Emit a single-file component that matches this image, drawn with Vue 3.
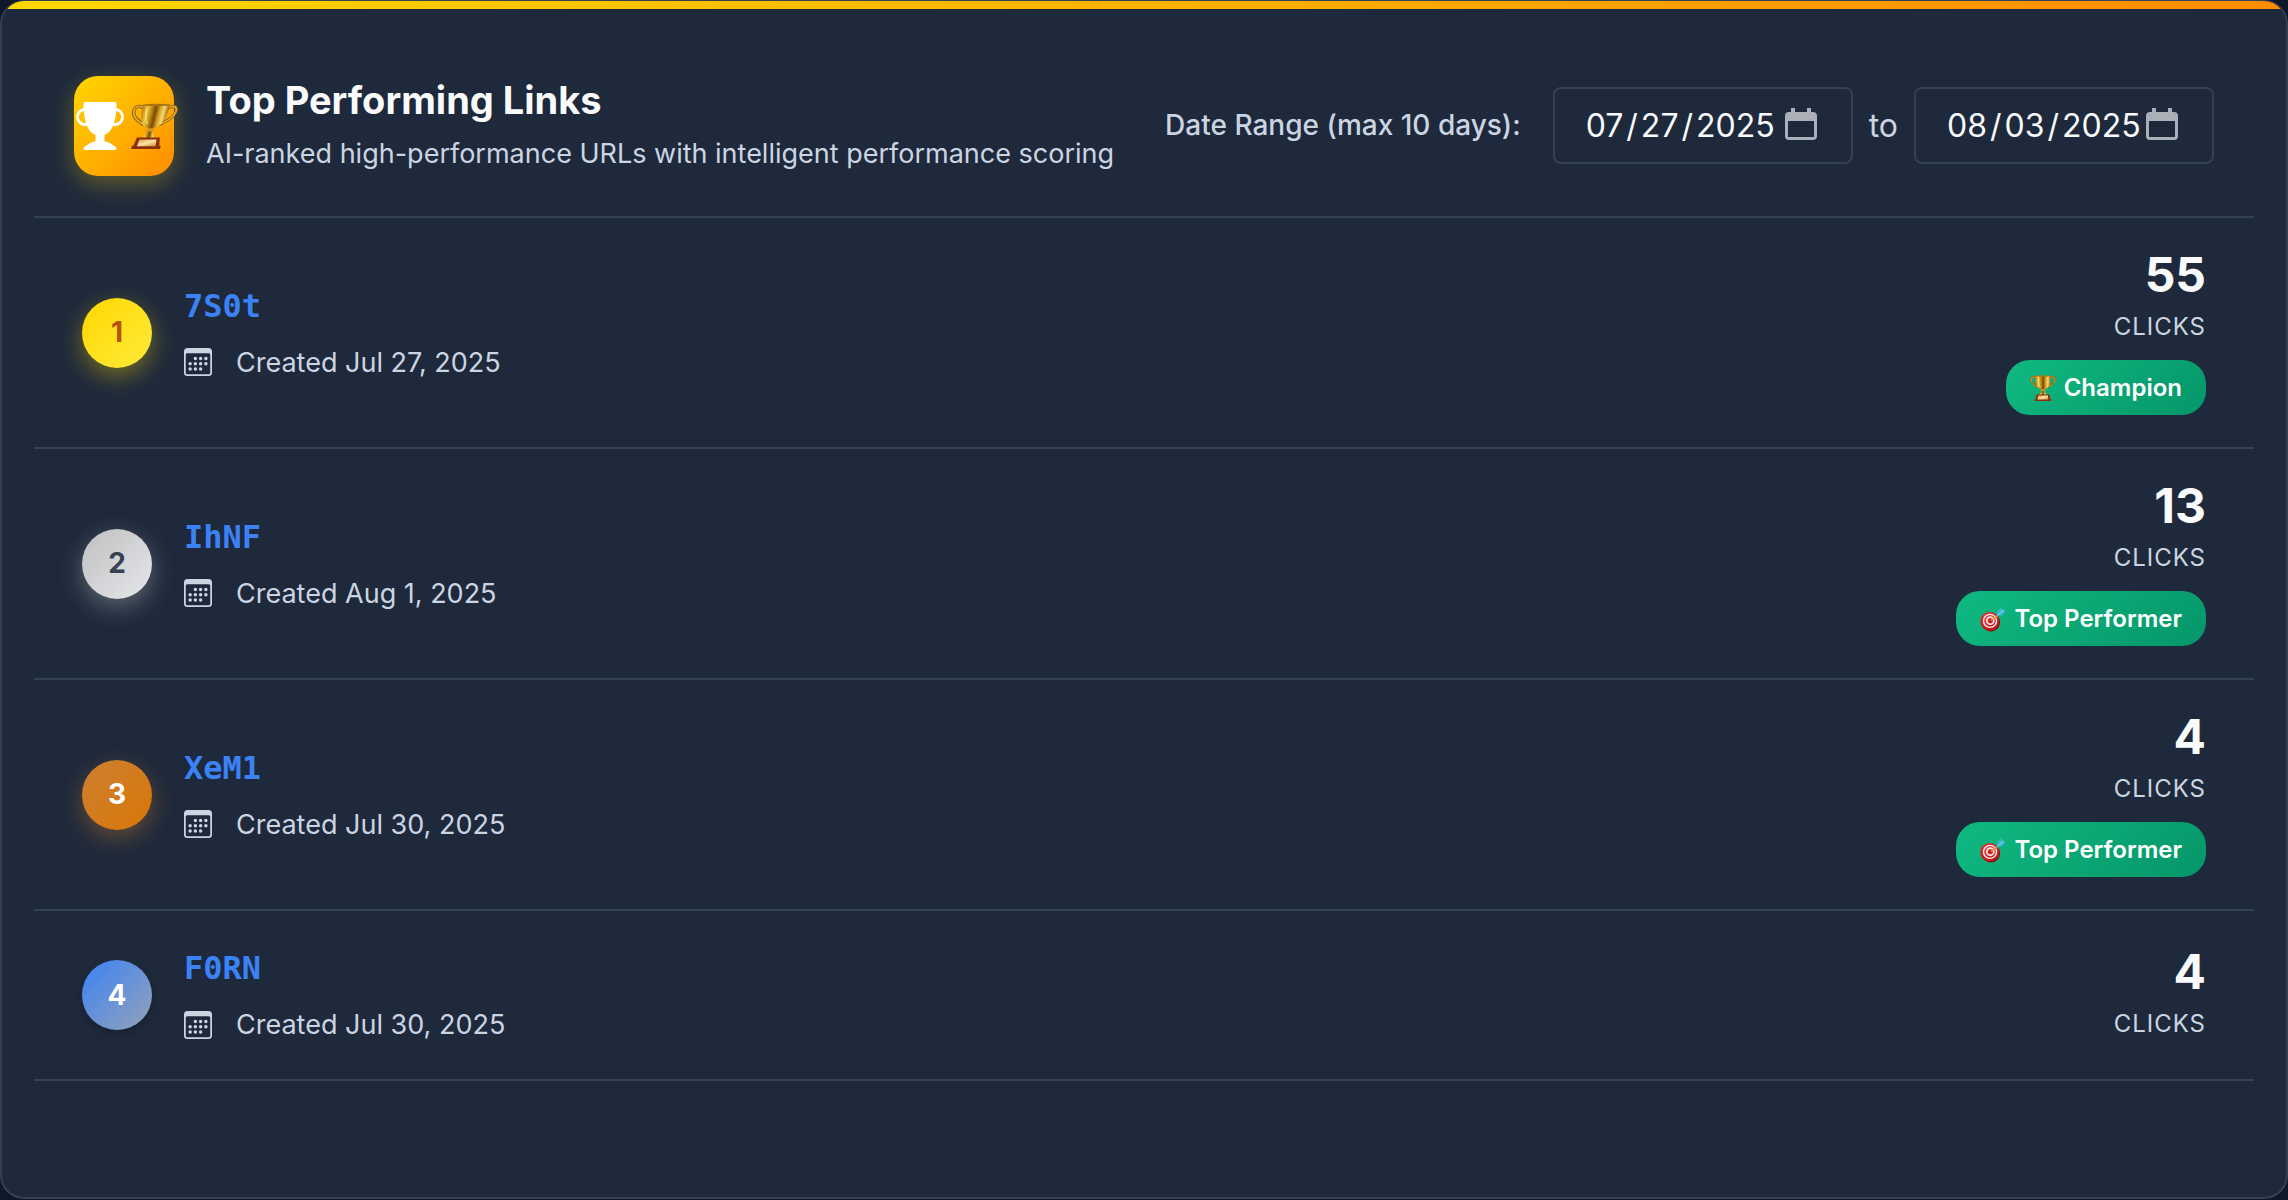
<script setup>
import { ref } from 'vue'

const startDate = ref('2025-07-27')
const endDate = ref('2025-08-03')

const links = ref([
  { code: '7S0t', created: 'Jul 27, 2025', clicks: 55, badge: 'Champion', icon: 'trophy' },
  { code: 'IhNF', created: 'Aug 1, 2025', clicks: 13, badge: 'Top Performer', icon: 'target' },
  { code: 'XeM1', created: 'Jul 30, 2025', clicks: 4, badge: 'Top Performer', icon: 'target' },
  { code: 'F0RN', created: 'Jul 30, 2025', clicks: 4 },
])
</script>

<template>
  <!-- Shared symbols -->
  <svg class="sprite" aria-hidden="true">
    <defs>
      <linearGradient id="gold" x1="0" x2="1" y1="0" y2="0">
        <stop offset="0" stop-color="#b87a12" />
        <stop offset="0.2" stop-color="#f0c945" />
        <stop offset="0.38" stop-color="#b98412" />
        <stop offset="0.52" stop-color="#7a4a06" />
        <stop offset="0.68" stop-color="#d9a526" />
        <stop offset="0.82" stop-color="#f5da6c" />
        <stop offset="1" stop-color="#a66a0c" />
      </linearGradient>
      <linearGradient id="plate" x1="0" x2="1" y1="0" y2="1">
        <stop offset="0" stop-color="#d99a4a" />
        <stop offset="0.5" stop-color="#fbe3a6" />
        <stop offset="1" stop-color="#cf8f3c" />
      </linearGradient>
      <radialGradient id="board" cx="0.4" cy="0.3" r="0.8">
        <stop offset="0" stop-color="#f03a3a" />
        <stop offset="1" stop-color="#b80f16" />
      </radialGradient>
      <symbol id="trophy" viewBox="0 0 48 48" overflow="visible">
        <g fill="none" stroke-linecap="round">
          <path d="M11 5C6 2 1.500 4 2 9c.7 6 6 9 13 13M37 5c5-3 9.500-1 9 4-.7 6-6 9-13 13" stroke="#8a5409" stroke-width="3.400" />
          <path d="M11 5C6 2 1.500 4 2 9c.7 6 6 9 13 13M37 5c5-3 9.500-1 9 4-.7 6-6 9-13 13" stroke="#dfae35" stroke-width="1.800" />
        </g>
        <path d="M19.500 24h9l-1.500 5c0 3 2 5 4.500 7.500h-15C19 34 21 32 21 29z" fill="url(#gold)" />
        <path d="M10 1.500h28c0 11-1 18-7 23-3 2.500-11 2.500-14 0-6-5-7-12-7-23z" fill="url(#gold)" />
        <path d="M15 5c0 8 1.500 13 4.500 17" fill="none" stroke="#fff0a0" stroke-opacity="0.600" stroke-width="1.500" />
        <ellipse cx="24" cy="2" rx="14" ry="1.300" fill="#a9740f" />
        <ellipse cx="24" cy="28" rx="4.500" ry="1.700" fill="#d19c25" />
        <path d="M12 36h24l1.500 8.500h1.500v3.500H9v-3.500h1.500z" fill="#8c2f0c" />
        <path d="M15 38h18l.8 7H14.200z" fill="url(#plate)" />
      </symbol>
      <symbol id="target" viewBox="0 0 48 48">
        <ellipse cx="20" cy="30" rx="17" ry="17" fill="#8d0b12" />
        <ellipse cx="18" cy="28" rx="17.500" ry="17" fill="url(#board)" />
        <circle cx="18.500" cy="27.500" r="12" fill="none" stroke="#f7ecec" stroke-width="2.600" />
        <circle cx="19" cy="27" r="6.500" fill="none" stroke="#f7ecec" stroke-width="3" />
        <circle cx="19.500" cy="27" r="2.500" fill="#a40d14" />
        <path d="M20 27 38 13" stroke="#e09a3a" stroke-width="3" />
        <path d="m31 19 1-10 8-7 .5 6L48 8l-7 9z" fill="#3fb6cf" />
        <path d="m34 16 10-9" stroke="#9fe6f2" stroke-width="1.600" />
      </symbol>
      <symbol id="calendar" viewBox="0 0 16 16">
        <path d="M14 0H2a2 2 0 0 0-2 2v12a2 2 0 0 0 2 2h12a2 2 0 0 0 2-2V2a2 2 0 0 0-2-2M1 3.857C1 3.384 1.448 3 2 3h12c.552 0 1 .384 1 .857v10.286c0 .473-.448.857-1 .857H2c-.552 0-1-.384-1-.857z" />
        <path d="M6.500 7a1 1 0 1 0 0-2 1 1 0 0 0 0 2m3 0a1 1 0 1 0 0-2 1 1 0 0 0 0 2m3 0a1 1 0 1 0 0-2 1 1 0 0 0 0 2m-9 3a1 1 0 1 0 0-2 1 1 0 0 0 0 2m3 0a1 1 0 1 0 0-2 1 1 0 0 0 0 2m3 0a1 1 0 1 0 0-2 1 1 0 0 0 0 2m3 0a1 1 0 1 0 0-2 1 1 0 0 0 0 2m-9 3a1 1 0 1 0 0-2 1 1 0 0 0 0 2m3 0a1 1 0 1 0 0-2 1 1 0 0 0 0 2m3 0a1 1 0 1 0 0-2 1 1 0 0 0 0 2" />
      </symbol>
    </defs>
  </svg>

  <section class="card">
    <header class="card-header">
      <div class="header-icon">
        <svg class="cup" viewBox="0 0 16 16" fill="currentColor">
          <path d="M2.500.5A.5.5 0 0 1 3 0h10a.5.5 0 0 1 .5.5q0 .807-.034 1.536a3 3 0 1 1-1.133 5.890c-.79 1.865-1.878 2.777-2.833 3.011v2.173l1.425.356c.194.048.377.135.537.255L13.300 15.100a.5.5 0 0 1-.3.900H3a.5.5 0 0 1-.3-.900l1.838-1.379c.16-.12.343-.207.537-.255L6.500 13.110v-2.173c-.955-.234-2.043-1.146-2.833-3.012a3 3 0 1 1-1.132-5.890A33 33 0 0 1 2.500.5m.099 2.540a2 2 0 0 0 .72 3.935c-.333-1.050-.588-2.346-.72-3.935m10.083 3.935a2 2 0 0 0 .72-3.935c-.133 1.590-.388 2.885-.72 3.935" />
        </svg>
        <svg class="cup" viewBox="0 0 48 48">
          <g transform="translate(4 1) skewX(-14)">
            <use href="#trophy" width="46" height="46" />
          </g>
        </svg>
      </div>
      <div class="heading">
        <h2>Top Performing Links</h2>
        <p>AI-ranked high-performance URLs with intelligent performance scoring</p>
      </div>
      <div class="date-range">
        <label class="range-label" for="start-date">Date Range (max 10 days):</label>
        <input id="start-date" v-model="startDate" type="date">
        <label class="to-label" for="end-date">to</label>
        <input id="end-date" v-model="endDate" type="date">
      </div>
    </header>

    <ol class="links">
      <li v-for="(link, index) in links" :key="link.code" class="link-row">
        <span class="rank" :class="'rank-' + (index + 1)">{{ index + 1 }}</span>
        <div class="info">
          <a href="#" class="code">{{ link.code }}</a>
          <div class="created">
            <svg class="calendar" fill="currentColor"><use href="#calendar" /></svg>
            <span>Created {{ link.created }}</span>
          </div>
        </div>
        <div class="stats">
          <div class="count">{{ link.clicks }}</div>
          <div class="count-label">Clicks</div>
          <div v-if="link.badge" class="badge">
            <svg class="emoji"><use :href="'#' + link.icon" /></svg>
            <span>{{ link.badge }}</span>
          </div>
        </div>
      </li>
    </ol>
  </section>
</template>

<style>
body {
  background: #0f172a;
}
</style>

<style scoped>
.sprite {
  position: absolute;
  width: 0;
  height: 0;
}

.card {
  position: relative;
  box-sizing: border-box;
  min-height: calc(100vh - 1px);
  padding: 34px 32px 32px;
  border: 2px solid #334155;
  border-top-width: 1px;
  border-radius: 24px;
  background: #1e293b;
  color: #cbd5e1;
  font-family: Inter, sans-serif;
  font-size: 27px;
  line-height: 45px;
  overflow: hidden;
}

/* accent bar along the top edge */
.card::before {
  content: '';
  position: absolute;
  top: 0;
  left: 0;
  right: 0;
  height: 8px;
  background: linear-gradient(90deg, #ffd700, #ff8c00);
}

.card-header {
  display: flex;
  align-items: center;
  gap: 32px;
  padding: 40px;
  border-bottom: 2px solid #334155;
}

.header-icon {
  display: flex;
  align-items: center;
  flex-shrink: 0;
  gap: 6px;
  box-sizing: border-box;
  width: 100px;
  height: 100px;
  padding-left: 2px;
  border-radius: 24px;
  background: linear-gradient(135deg, #ffd700, #ff8c00);
  box-shadow: 0 8px 24px rgba(255, 215, 0, 0.3);
  color: #fff;
}

.cup {
  flex-shrink: 0;
  width: 48px;
  height: 48px;
  overflow: visible;
}

h2 {
  margin: 0 0 6px;
  color: #f8fafc;
  font-size: 38px;
  font-weight: 700;
  line-height: 50px;
}

.heading p {
  margin: 0;
}

.date-range {
  display: flex;
  align-items: center;
  flex-shrink: 0;
  gap: 16px;
  margin-left: auto;
}

.range-label {
  margin-right: 16px;
  font-size: 28px;
  font-weight: 500;
}

.to-label {
  font-size: 32px;
}

.date-range input {
  box-sizing: border-box;
  width: 300px;
  padding: 16px 32px 16px 30px;
  border: 2px solid #334155;
  border-radius: 8px;
  background: transparent;
  color: #f8fafc;
  font-family: inherit;
  font-size: 32px;
  line-height: 39px;
}

.date-range input::-webkit-datetime-edit-text {
  padding: 0 2px;
}

.date-range input::-webkit-calendar-picker-indicator {
  width: 32px;
  height: 32px;
  margin: 0 2px 4px 0;
  padding: 0;
  background: url("data:image/svg+xml,%3Csvg xmlns='http://www.w3.org/2000/svg' viewBox='0 0 32 32'%3E%3Cpath fill='%23abb0b8' fill-rule='evenodd' d='M6 0h4v4h12V0h4v4h2a4 4 0 0 1 4 4v20a4 4 0 0 1-4 4H4a4 4 0 0 1-4-4V8a4 4 0 0 1 4-4h2zM3 13v16h26V13z'/%3E%3C/svg%3E") center / 32px no-repeat;
}

.links {
  margin: 0;
  padding: 0;
  list-style: none;
}

.link-row {
  display: flex;
  align-items: center;
  gap: 32px;
  padding: 32px 48px;
  border-bottom: 2px solid #334155;
}

.rank {
  display: flex;
  align-items: center;
  justify-content: center;
  flex-shrink: 0;
  width: 70px;
  height: 70px;
  border-radius: 50%;
  color: #fff;
  font-size: 28px;
  font-weight: 700;
}

.rank-1 {
  background: linear-gradient(135deg, #ffd700, #ffeb3b);
  box-shadow: 0 8px 24px rgba(255, 215, 0, 0.4);
  color: #b45309;
}

.rank-2 {
  background: linear-gradient(135deg, #c0c0c0, #e5e7eb);
  box-shadow: 0 8px 24px rgba(192, 192, 192, 0.4);
  color: #374151;
}

.rank-3 {
  background: linear-gradient(135deg, #cd7f32, #d97706);
  box-shadow: 0 8px 24px rgba(205, 127, 50, 0.4);
}

.rank-4 {
  background: linear-gradient(135deg, #3b82f6, #94a3b8);
  box-shadow: 0 4px 8px rgba(0, 0, 0, 0.2);
}

.info {
  flex: 1;
}

.code {
  display: block;
  width: fit-content;
  margin-bottom: 8px;
  color: #3b82f6;
  font-family: "DejaVu Sans Mono", monospace;
  font-size: 32px;
  font-weight: 700;
  line-height: 51px;
  text-decoration: none;
}

.created {
  display: flex;
  align-items: center;
  gap: 24px;
}

.calendar {
  width: 28px;
  height: 28px;
}

.stats {
  display: flex;
  flex-direction: column;
  align-items: flex-end;
}

.count {
  margin-bottom: 8px;
  color: #f8fafc;
  font-size: 48px;
  font-weight: 700;
  line-height: 50px;
}

.count-label {
  font-size: 24px;
  line-height: 38px;
  letter-spacing: 1px;
  text-transform: uppercase;
}

.badge {
  display: flex;
  align-items: center;
  gap: 8px;
  margin-top: 14px;
  padding: 8px 24px;
  border-radius: 24px;
  background: linear-gradient(135deg, #10b981, #059669);
  color: #fff;
  font-size: 24px;
  font-weight: 600;
  line-height: 39px;
}

.emoji {
  width: 26px;
  height: 26px;
}
</style>
